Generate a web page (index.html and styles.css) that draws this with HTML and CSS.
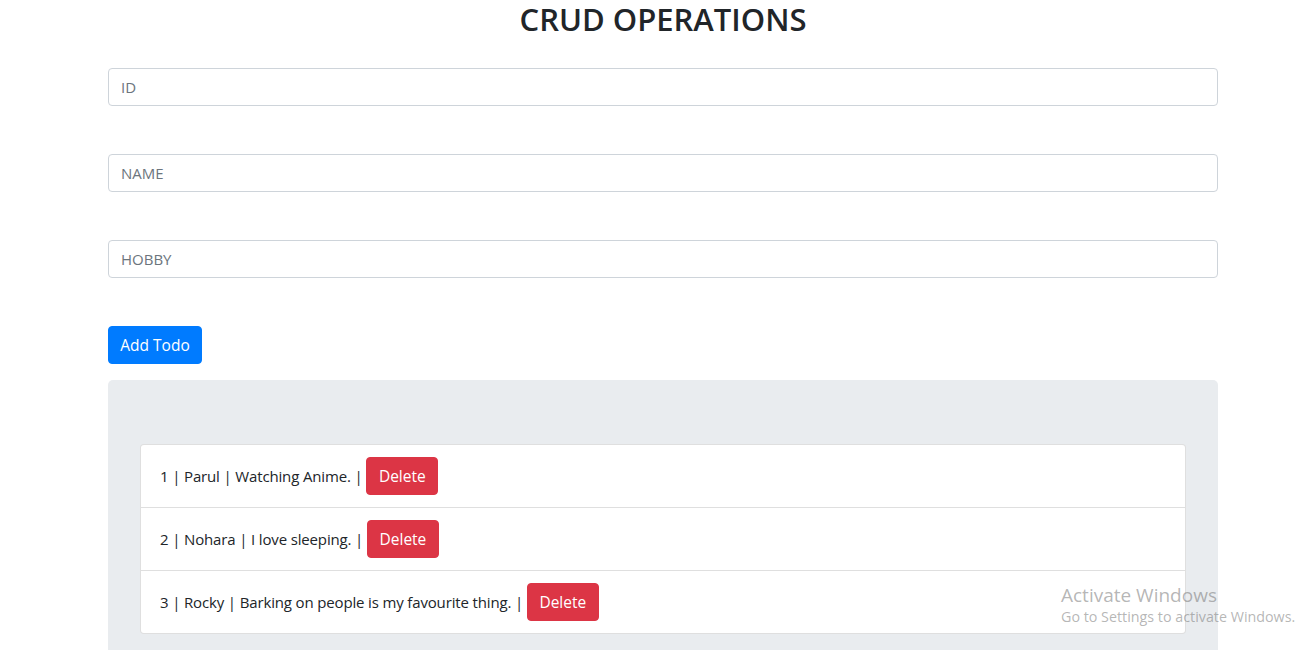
FILE: index.html
```html
<!DOCTYPE html>
<html>
<head>
<meta charset="utf-8">
<link rel="stylesheet" href="styles.css">
</head>
<body>
<div class="container">
  <h2 class="title">CRUD OPERATIONS</h2>
  <form class="form">
    <input class="field" type="text" placeholder="ID">
    <input class="field" type="text" placeholder="NAME">
    <input class="field" type="text" placeholder="HOBBY">
    <button type="button" class="btn btn-primary">Add Todo</button>
  </form>
  <div class="jumbotron">
    <ul class="list-group">
      <li class="list-item">1 | Parul | Watching Anime. | <button type="button" class="btn btn-danger">Delete</button></li>
      <li class="list-item">2 | Nohara | I love sleeping. | <button type="button" class="btn btn-danger">Delete</button></li>
      <li class="list-item">3 | Rocky | Barking on people is my favourite thing. | <button type="button" class="btn btn-danger">Delete</button></li>
    </ul>
  </div>
</div>
<div class="watermark">
  <div class="wm-title">Activate Windows</div>
  <div class="wm-sub">Go to Settings to activate Windows.</div>
</div>
</body>
</html>
```
FILE: styles.css
```css
html, body {
  margin: 0;
  padding: 0;
  background: #fff;
}
body {
  font-family: "Open Sans", "Noto Sans", sans-serif;
  font-size: 15px;
  color: #212529;
  overflow: hidden;
}
.container {
  width: 1110px;
  margin-left: 108px;
}
.title {
  margin: 0;
  font-size: 31px;
  font-weight: 600;
  line-height: 38px;
  text-align: center;
  color: #212529;
}
.form {
  margin-top: 30px;
  display: flex;
  flex-direction: column;
  align-items: flex-start;
  gap: 48px;
}
.field {
  box-sizing: border-box;
  width: 100%;
  height: 38px;
  padding: 6px 12px;
  border: 1px solid #ced4da;
  border-radius: 4px;
  font-family: inherit;
  font-size: 15px;
  color: #495057;
  outline: none;
}
.field::placeholder {
  color: #6c757d;
}
.btn {
  box-sizing: border-box;
  height: 38px;
  padding: 0 12px;
  border: 1px solid transparent;
  border-radius: 4px;
  font-family: inherit;
  font-size: 15.5px;
  color: #fff;
  cursor: pointer;
}
.btn-primary {
  background: #007bff;
  border-color: #007bff;
  width: 94px;
  padding: 0;
}
.btn-danger {
  background: #dc3545;
  border-color: #dc3545;
  width: 72px;
  padding: 0;
  vertical-align: middle;
}
.jumbotron {
  margin-top: 16px;
  background: #e9ecef;
  border-radius: 5px 5px 0 0;
  padding: 64px 32px 40px;
}
.list-group {
  list-style: none;
  margin: 0;
  padding: 0;
  background: #fff;
  border: 1px solid rgba(0,0,0,0.125);
  border-radius: 4px;
}
.list-item {
  height: 62px;
  box-sizing: border-box;
  padding: 12px 19px;
  display: flex;
  align-items: center;
  white-space: pre;
  letter-spacing: -0.15px;
}
.list-item .btn {
  letter-spacing: 0;
}
.list-item + .list-item {
  border-top: 1px solid rgba(0,0,0,0.125);
  height: 63px;
}
.watermark {
  position: absolute;
  left: 1061px;
  top: 583px;
  color: rgba(120,120,120,0.55);
  font-family: "Open Sans", "Noto Sans", sans-serif;
}
.wm-title {
  font-size: 19px;
  line-height: 24px;
}
.wm-sub {
  font-size: 14.3px;
  line-height: 20px;
}
```
